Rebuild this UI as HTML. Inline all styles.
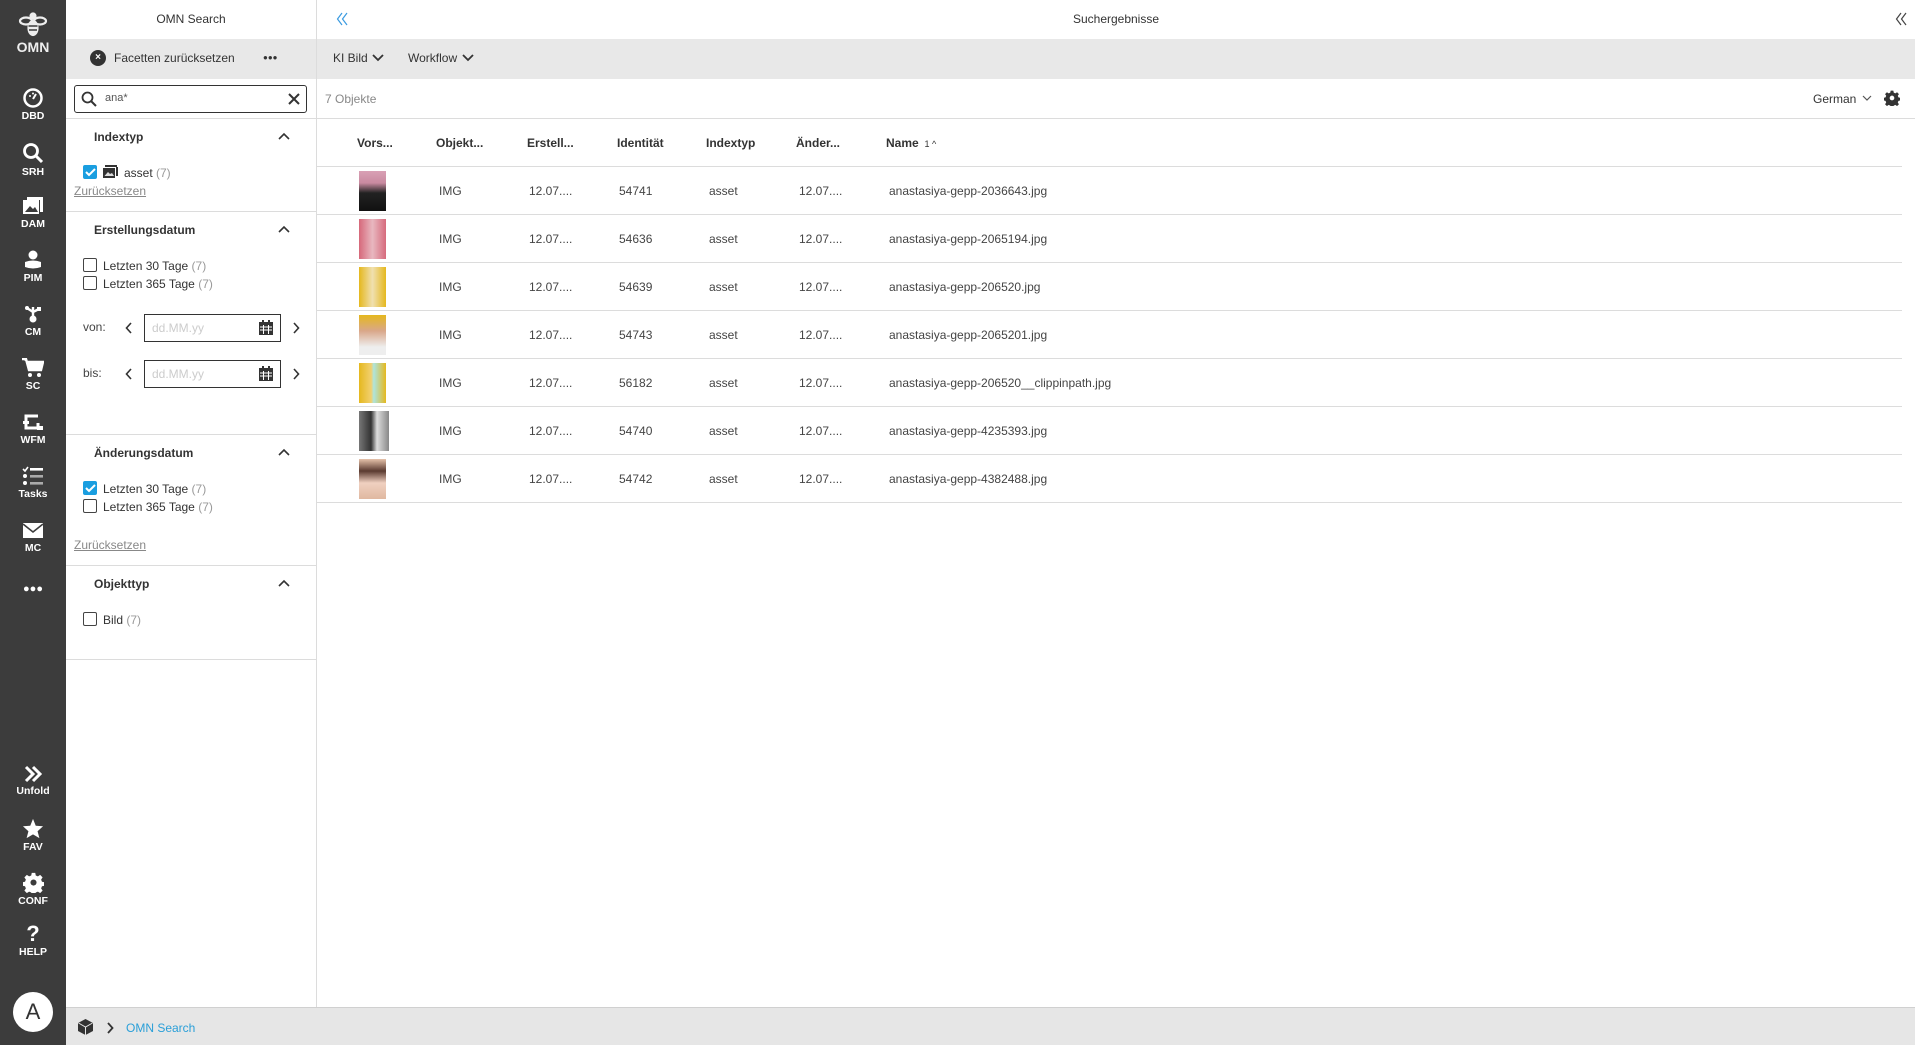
<!DOCTYPE html>
<html><head><meta charset="utf-8"><style>
*{box-sizing:border-box;margin:0;padding:0}
body{width:1915px;height:1045px;overflow:hidden;position:relative;background:#fff;font-family:"Liberation Sans",sans-serif;color:#333;font-size:12px}
.a{position:absolute;white-space:nowrap}
#sb{position:absolute;left:0;top:0;width:66px;height:1045px;background:#3c3c3c}
.ni{position:absolute;left:0;width:66px;text-align:center;color:#fff;font-size:10.5px;font-weight:bold}
.ni svg{display:block;margin:0 auto 2px}
.hl{position:absolute;height:1px;background:#dcdcdc}
.cb{position:absolute;width:14px;height:14px;border:1.5px solid #444;border-radius:2px;background:#fff}
.cb.on{background:#1a9ee0;border-color:#1a9ee0}
.lbl{position:absolute;font-size:12px;color:#333}
.lbl i{font-style:normal;color:#999}
.h{position:absolute;font-weight:bold;font-size:12px;color:#333}
.chev{position:absolute}
.th{position:absolute;top:136px;font-weight:bold;font-size:12px;color:#333}
.td{position:absolute;font-size:12px;color:#444}
.thumb{position:absolute;left:359px;width:27px;height:40px}
</style></head><body>
<div id="sb">
 <svg class="a" style="left:17px;top:11px" width="32" height="28" viewBox="0 0 32 28" fill="none" stroke="#eee" stroke-width="2.2"><circle cx="16" cy="5" r="2.5" fill="#eee"/><ellipse cx="9" cy="10" rx="6" ry="3.5"/><ellipse cx="23" cy="10" rx="6" ry="3.5"/><ellipse cx="16" cy="17" rx="4.5" ry="7" fill="#eee"/><path d="M11.5 15 H20.5 M12 19 H20" stroke="#3c3c3c" stroke-width="1.4"/></svg>
 <div class="a" style="left:0;width:66px;top:39px;text-align:center;color:#eee;font-weight:bold;font-size:14px">OMN</div>
 <div class="ni" style="top:88px"><svg width="20" height="20" viewBox="0 0 20 20"><circle cx="10" cy="10" r="8.5" fill="none" stroke="#fff" stroke-width="2.5"/><path d="M10 11 L13 6" stroke="#fff" stroke-width="2"/><circle cx="7" cy="8" r="1" fill="#fff"/><circle cx="10" cy="5.5" r="1" fill="#fff"/></svg>DBD</div>
 <div class="ni" style="top:142px"><svg width="22" height="22" viewBox="0 0 22 22"><circle cx="9" cy="9" r="6.5" fill="none" stroke="#fff" stroke-width="2.8"/><path d="M14 14 L20 20" stroke="#fff" stroke-width="3"/></svg>SRH</div>
 <div class="ni" style="top:196px"><svg width="22" height="20" viewBox="0 0 22 20"><rect x="1" y="4" width="16" height="14" fill="#fff"/><rect x="5" y="1" width="16" height="3" fill="#fff"/><rect x="18" y="4" width="3" height="12" fill="#fff"/><path d="M3 16 L8 10 L11 13 L13 11 L16 16Z" fill="#3c3c3c"/></svg>DAM</div>
 <div class="ni" style="top:250px"><svg width="20" height="20" viewBox="0 0 20 20" fill="#fff"><circle cx="10" cy="5" r="4.5"/><path d="M2 12 Q10 9 18 12 L18 17 Q10 20 2 17Z"/></svg>PIM</div>
 <div class="ni" style="top:304px"><svg width="20" height="20" viewBox="0 0 20 20" fill="#fff"><circle cx="10" cy="15" r="3.5"/><path d="M10 12 V3 M10 8 L4 4 M10 8 L16 5" stroke="#fff" stroke-width="2.4"/><circle cx="4" cy="4" r="2"/><rect x="14" y="3" width="4" height="4"/></svg>CM</div>
 <div class="ni" style="top:358px"><svg width="22" height="20" viewBox="0 0 22 20" fill="#fff"><path d="M0 1 H4 L7 12 H19 L21 4 H5" stroke="#fff" stroke-width="2.4" fill="#fff"/><circle cx="8" cy="17" r="2"/><circle cx="17" cy="17" r="2"/></svg>SC</div>
 <div class="ni" style="top:412px"><svg width="22" height="20" viewBox="0 0 22 20"><path d="M4 9 V4 H16 M4 12 V16 H16 V11" stroke="#fff" stroke-width="3" fill="none"/><rect x="1" y="9" width="6" height="3" fill="#fff"/><rect x="15" y="14" width="6" height="4" fill="#fff"/></svg>WFM</div>
 <div class="ni" style="top:466px"><svg width="22" height="20" viewBox="0 0 22 20" fill="#fff"><path d="M1 3 L3 5 L6 1" stroke="#fff" stroke-width="1.6" fill="none"/><circle cx="3" cy="10" r="2"/><circle cx="3" cy="17" r="2"/><rect x="8" y="2" width="13" height="2.6"/><rect x="8" y="9" width="13" height="2.6" fill="#aaa"/><rect x="8" y="16" width="13" height="2.6" fill="#aaa"/></svg>Tasks</div>
 <div class="ni" style="top:522px"><svg width="22" height="18" viewBox="0 0 22 18"><rect x="1" y="1" width="20" height="15" fill="#fff"/><path d="M1 2 L11 10 L21 2" stroke="#3c3c3c" stroke-width="1.6" fill="none"/></svg>MC</div>
 <div class="ni" style="top:584px;font-size:11px;line-height:10px">&#9679;&#9679;&#9679;</div>
 <div class="ni" style="top:765px"><svg width="20" height="18" viewBox="0 0 20 18"><path d="M3 2 L10 9 L3 16 M10 2 L17 9 L10 16" stroke="#fff" stroke-width="3" fill="none"/></svg>Unfold</div>
 <div class="ni" style="top:818px"><svg width="22" height="21" viewBox="0 0 24 23"><path d="M12 1 L15 8.5 L23 9 L17 14.5 L19 22 L12 18 L5 22 L7 14.5 L1 9 L9 8.5Z" fill="#fff"/></svg>FAV</div>
 <div class="ni" style="top:872px"><svg width="21" height="21" viewBox="0 0 24 24"><path fill="#fff" d="M10 1h4l.6 3 2.4 1 2.6-1.7 2.8 2.8L20.7 8.7l1 2.4 3 .6v4l-3 .6-1 2.4 1.7 2.6-2.8 2.8-2.6-1.7-2.4 1-.6 3h-4l-.6-3-2.4-1-2.6 1.7-2.8-2.8 1.7-2.6-1-2.4-3-.6v-4l3-.6 1-2.4L1.6 6.1l2.8-2.8L7 5l2.4-1z"/><circle cx="12" cy="12" r="3.5" fill="#3c3c3c"/></svg>CONF</div>
 <div class="ni" style="top:922px;font-size:22px;line-height:24px">?<div style="font-size:10.5px;line-height:12px">HELP</div></div>
 <div class="a" style="left:13px;top:992px;width:40px;height:40px;border-radius:50%;background:#fff;color:#333;font-size:22px;text-align:center;line-height:40px">A</div>
</div>

<!-- left panel -->
<div class="a" style="left:316px;top:0;width:1px;height:1008px;background:#dcdcdc"></div>
<div class="a" style="left:66px;width:250px;top:12px;text-align:center;font-size:12px">OMN Search</div>
<div class="a" style="left:66px;top:39px;width:1849px;height:40px;background:#e8e8e8"></div>
<div class="a" style="left:316px;top:39px;width:1px;height:40px;background:#dcdcdc"></div>
<div class="a" style="left:90px;top:50px;width:16px;height:16px;border-radius:50%;background:#333;color:#fff;font-size:10px;text-align:center;line-height:16px;font-weight:bold">×</div>
<div class="a" style="left:114px;top:51px;font-size:12px">Facetten zurücksetzen</div>
<div class="a" style="left:263px;top:53px;font-size:8px;letter-spacing:0px">&#9679;&#9679;&#9679;</div>
<div class="a" style="left:74px;top:85px;width:233px;height:28px;border:1px solid #333;border-radius:3px"></div>
<svg class="a" style="left:81px;top:91px" width="16" height="16" viewBox="0 0 16 16"><circle cx="6.5" cy="6.5" r="5" fill="none" stroke="#333" stroke-width="1.8"/><path d="M10 10 L15 15" stroke="#333" stroke-width="2"/></svg>
<div class="a" style="left:105px;top:92px;font-size:11px;color:#555">ana*</div>
<svg class="a" style="left:288px;top:93px" width="12" height="12"><path d="M1 1 L11 11 M11 1 L1 11" stroke="#333" stroke-width="2"/></svg>
<div class="hl" style="left:66px;top:118px;width:1849px"></div>

<div class="h" style="left:94px;top:130px">Indextyp</div>
<svg class="chev" style="left:278px;top:132px" width="12" height="8"><path d="M1 7 L6 2 L11 7" stroke="#333" stroke-width="1.6" fill="none"/></svg>
<div class="cb on" style="left:83px;top:165px"></div><svg class="a" style="left:85px;top:168px" width="11" height="9"><path d="M1 4 L4 7 L10 1" stroke="#fff" stroke-width="2" fill="none"/></svg>
<svg class="a" style="left:103px;top:165px" width="15" height="14" viewBox="0 0 15 14"><rect x="0" y="3" width="12" height="10" fill="#333"/><rect x="2" y="0" width="12" height="2" fill="#333"/><rect x="13" y="2" width="2" height="9" fill="#333"/><path d="M1.5 11 L5 7 L7 9 L9 8 L11 11Z" fill="#ddd"/></svg>
<div class="lbl" style="left:124px;top:166px">asset <i>(7)</i></div>
<div class="lbl" style="left:74px;top:184px;color:#888;text-decoration:underline">Zurücksetzen</div>
<div class="hl" style="left:66px;top:211px;width:250px"></div>

<div class="h" style="left:94px;top:223px">Erstellungsdatum</div>
<svg class="chev" style="left:278px;top:225px" width="12" height="8"><path d="M1 7 L6 2 L11 7" stroke="#333" stroke-width="1.6" fill="none"/></svg>
<div class="cb" style="left:83px;top:258px"></div><div class="lbl" style="left:103px;top:259px">Letzten 30 Tage <i>(7)</i></div>
<div class="cb" style="left:83px;top:276px"></div><div class="lbl" style="left:103px;top:277px">Letzten 365 Tage <i>(7)</i></div>
<div class="lbl" style="left:83px;top:320px;color:#444">von:</div>
<svg class="a" style="left:125px;top:322px" width="8" height="12"><path d="M6 1 L1.5 6 L6 11" stroke="#333" stroke-width="1.6" fill="none"/></svg>
<div class="a" style="left:144px;top:314px;width:137px;height:28px;border:1px solid #333"></div>
<div class="lbl" style="left:152px;top:321px;color:#ccc">dd.MM.yy</div>
<svg class="a" style="left:259px;top:320px" width="14" height="15" viewBox="0 0 14 15"><rect x="0" y="2" width="14" height="13" fill="#333"/><rect x="3" y="0" width="2" height="4" fill="#333"/><rect x="9" y="0" width="2" height="4" fill="#333"/><path d="M1 7H13M1 10H13M4.5 5V14M9.5 5V14" stroke="#fff" stroke-width="1"/></svg>
<svg class="a" style="left:292px;top:322px" width="8" height="12"><path d="M2 1 L6.5 6 L2 11" stroke="#333" stroke-width="1.6" fill="none"/></svg>
<div class="lbl" style="left:83px;top:366px;color:#444">bis:</div>
<svg class="a" style="left:125px;top:368px" width="8" height="12"><path d="M6 1 L1.5 6 L6 11" stroke="#333" stroke-width="1.6" fill="none"/></svg>
<div class="a" style="left:144px;top:360px;width:137px;height:28px;border:1px solid #333"></div>
<div class="lbl" style="left:152px;top:367px;color:#ccc">dd.MM.yy</div>
<svg class="a" style="left:259px;top:366px" width="14" height="15" viewBox="0 0 14 15"><rect x="0" y="2" width="14" height="13" fill="#333"/><rect x="3" y="0" width="2" height="4" fill="#333"/><rect x="9" y="0" width="2" height="4" fill="#333"/><path d="M1 7H13M1 10H13M4.5 5V14M9.5 5V14" stroke="#fff" stroke-width="1"/></svg>
<svg class="a" style="left:292px;top:368px" width="8" height="12"><path d="M2 1 L6.5 6 L2 11" stroke="#333" stroke-width="1.6" fill="none"/></svg>
<div class="hl" style="left:66px;top:434px;width:250px"></div>

<div class="h" style="left:94px;top:446px">Änderungsdatum</div>
<svg class="chev" style="left:278px;top:448px" width="12" height="8"><path d="M1 7 L6 2 L11 7" stroke="#333" stroke-width="1.6" fill="none"/></svg>
<div class="cb on" style="left:83px;top:481px"></div><svg class="a" style="left:85px;top:484px" width="11" height="9"><path d="M1 4 L4 7 L10 1" stroke="#fff" stroke-width="2" fill="none"/></svg>
<div class="lbl" style="left:103px;top:482px">Letzten 30 Tage <i>(7)</i></div>
<div class="cb" style="left:83px;top:499px"></div><div class="lbl" style="left:103px;top:500px">Letzten 365 Tage <i>(7)</i></div>
<div class="lbl" style="left:74px;top:538px;color:#888;text-decoration:underline">Zurücksetzen</div>
<div class="hl" style="left:66px;top:565px;width:250px"></div>

<div class="h" style="left:94px;top:577px">Objekttyp</div>
<svg class="chev" style="left:278px;top:579px" width="12" height="8"><path d="M1 7 L6 2 L11 7" stroke="#333" stroke-width="1.6" fill="none"/></svg>
<div class="cb" style="left:83px;top:612px"></div><div class="lbl" style="left:103px;top:613px">Bild <i>(7)</i></div>
<div class="hl" style="left:66px;top:659px;width:250px"></div>

<!-- right panel -->
<svg class="a" style="left:336px;top:12px" width="12" height="14"><path d="M6 1 L1.5 7 L6 13 M11 1 L6.5 7 L11 13" stroke="#3b9be0" stroke-width="1.2" fill="none"/></svg>
<div class="a" style="left:1000px;width:232px;top:12px;text-align:center">Suchergebnisse</div>
<svg class="a" style="left:1895px;top:12px" width="12" height="14"><path d="M6 1 L1.5 7 L6 13 M11 1 L6.5 7 L11 13" stroke="#444" stroke-width="1.2" fill="none"/></svg>
<div class="a" style="left:333px;top:51px">KI Bild</div>
<svg class="a" style="left:372px;top:54px" width="12" height="8"><path d="M1 1 L6 6 L11 1" stroke="#333" stroke-width="1.8" fill="none"/></svg>
<div class="a" style="left:408px;top:51px">Workflow</div>
<svg class="a" style="left:462px;top:54px" width="12" height="8"><path d="M1 1 L6 6 L11 1" stroke="#333" stroke-width="1.8" fill="none"/></svg>
<div class="a" style="left:325px;top:92px;color:#888">7 Objekte</div>
<div class="a" style="left:1813px;top:92px">German</div>
<svg class="a" style="left:1862px;top:95px" width="10" height="7"><path d="M1 1 L5 5 L9 1" stroke="#555" stroke-width="1.2" fill="none"/></svg>
<svg class="a" style="left:1884px;top:90px" width="16" height="16" viewBox="0 0 24 24"><path fill="#333" d="M10 1h4l.6 3 2.4 1 2.6-1.7 2.8 2.8L20.7 8.7l1 2.4 3 .6v4l-3 .6-1 2.4 1.7 2.6-2.8 2.8-2.6-1.7-2.4 1-.6 3h-4l-.6-3-2.4-1-2.6 1.7-2.8-2.8 1.7-2.6-1-2.4-3-.6v-4l3-.6 1-2.4L1.6 6.1l2.8-2.8L7 5l2.4-1z"/><circle cx="12" cy="12" r="3.5" fill="#fff"/></svg>

<div class="th" style="left:357px">Vors...</div>
<div class="th" style="left:436px">Objekt...</div>
<div class="th" style="left:527px">Erstell...</div>
<div class="th" style="left:617px">Identität</div>
<div class="th" style="left:706px">Indextyp</div>
<div class="th" style="left:796px">Änder...</div>
<div class="th" style="left:886px">Name <span style="font-weight:normal;font-size:9px">&nbsp;1 ^</span></div>
<div class="hl" style="left:317px;top:166px;width:1585px"></div>

<div class="thumb" style="top:171px;background:linear-gradient(#d9a0b5,#c98aa0 30%,#222 55%,#111)"></div>
<div class="thumb" style="top:219px;background:linear-gradient(90deg,#d6687a,#e8b8c0 50%,#d66a7c)"></div>
<div class="thumb" style="top:267px;background:linear-gradient(90deg,#e5b81e,#f0e0b0 50%,#e5b81e)"></div>
<div class="thumb" style="top:315px;background:linear-gradient(#e5b81e,#d9a78a 40%,#eee 80%)"></div>
<div class="thumb" style="top:363px;background:linear-gradient(90deg,#e5b81e,#f2d070 45%,#aee4dc 55%,#e5b81e)"></div>
<div class="thumb" style="top:411px;left:359px;width:30px;background:linear-gradient(90deg,#777,#333 40%,#ddd 60%,#888)"></div>
<div class="thumb" style="top:459px;background:linear-gradient(#e6c2aa,#5a3a30 30%,#f0d0c0 60%,#e0b8a0)"></div>

<div class="td" style="left:439px;top:184px">IMG</div><div class="td" style="left:529px;top:184px">12.07....</div><div class="td" style="left:619px;top:184px">54741</div><div class="td" style="left:709px;top:184px">asset</div><div class="td" style="left:799px;top:184px">12.07....</div><div class="td" style="left:889px;top:184px">anastasiya-gepp-2036643.jpg</div>
<div class="hl" style="left:317px;top:214px;width:1585px"></div>
<div class="td" style="left:439px;top:232px">IMG</div><div class="td" style="left:529px;top:232px">12.07....</div><div class="td" style="left:619px;top:232px">54636</div><div class="td" style="left:709px;top:232px">asset</div><div class="td" style="left:799px;top:232px">12.07....</div><div class="td" style="left:889px;top:232px">anastasiya-gepp-2065194.jpg</div>
<div class="hl" style="left:317px;top:262px;width:1585px"></div>
<div class="td" style="left:439px;top:280px">IMG</div><div class="td" style="left:529px;top:280px">12.07....</div><div class="td" style="left:619px;top:280px">54639</div><div class="td" style="left:709px;top:280px">asset</div><div class="td" style="left:799px;top:280px">12.07....</div><div class="td" style="left:889px;top:280px">anastasiya-gepp-206520.jpg</div>
<div class="hl" style="left:317px;top:310px;width:1585px"></div>
<div class="td" style="left:439px;top:328px">IMG</div><div class="td" style="left:529px;top:328px">12.07....</div><div class="td" style="left:619px;top:328px">54743</div><div class="td" style="left:709px;top:328px">asset</div><div class="td" style="left:799px;top:328px">12.07....</div><div class="td" style="left:889px;top:328px">anastasiya-gepp-2065201.jpg</div>
<div class="hl" style="left:317px;top:358px;width:1585px"></div>
<div class="td" style="left:439px;top:376px">IMG</div><div class="td" style="left:529px;top:376px">12.07....</div><div class="td" style="left:619px;top:376px">56182</div><div class="td" style="left:709px;top:376px">asset</div><div class="td" style="left:799px;top:376px">12.07....</div><div class="td" style="left:889px;top:376px">anastasiya-gepp-206520__clippinpath.jpg</div>
<div class="hl" style="left:317px;top:406px;width:1585px"></div>
<div class="td" style="left:439px;top:424px">IMG</div><div class="td" style="left:529px;top:424px">12.07....</div><div class="td" style="left:619px;top:424px">54740</div><div class="td" style="left:709px;top:424px">asset</div><div class="td" style="left:799px;top:424px">12.07....</div><div class="td" style="left:889px;top:424px">anastasiya-gepp-4235393.jpg</div>
<div class="hl" style="left:317px;top:454px;width:1585px"></div>
<div class="td" style="left:439px;top:472px">IMG</div><div class="td" style="left:529px;top:472px">12.07....</div><div class="td" style="left:619px;top:472px">54742</div><div class="td" style="left:709px;top:472px">asset</div><div class="td" style="left:799px;top:472px">12.07....</div><div class="td" style="left:889px;top:472px">anastasiya-gepp-4382488.jpg</div>
<div class="hl" style="left:317px;top:502px;width:1585px"></div>

<!-- footer -->
<div class="a" style="left:66px;top:1007px;width:1849px;height:38px;background:#e6e6e6;border-top:1px solid #d0d0d0"></div>
<svg class="a" style="left:78px;top:1019px" width="15" height="16" viewBox="0 0 15 16"><path d="M7.5 0 L15 4 L15 12 L7.5 16 L0 12 L0 4Z" fill="#333"/><path d="M0.5 4 L7.5 8 L14.5 4 M7.5 8 V16" stroke="#e6e6e6" stroke-width="1" fill="none"/></svg>
<svg class="a" style="left:106px;top:1022px" width="8" height="12"><path d="M2 1 L6.5 6 L2 11" stroke="#333" stroke-width="1.8" fill="none"/></svg>
<div class="a" style="left:126px;top:1021px;color:#2a9fd8">OMN Search</div>
</body></html>
